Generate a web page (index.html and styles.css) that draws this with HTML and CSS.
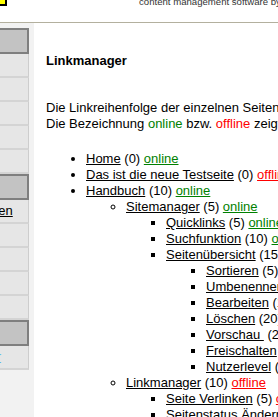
FILE: index.html
```html
<!DOCTYPE html>
<html lang="de">
<head>
    <meta charset="UTF-8">
    <title>Linkmanager</title>
    <link rel="stylesheet" href="styles.css">
</head>
<body>

    <div class="top">
        <div class="logo"></div>
        <div class="tagline">content management software by moderne-webseiten.de</div>
    </div>

    <div class="page">
        <div class="side">
            <div class="nav">
                <div class="nav-head">Seiten</div>
                <a class="nav-item" href="#">Übersicht</a>
                <a class="nav-item" href="#">Neue Seite</a>
                <a class="nav-item" href="#">Sortieren</a>
                <a class="nav-item" href="#">Papierkorb</a>
                <a class="nav-item" href="#">Vorlagen</a>

                <div class="nav-head">Inhalte</div>
                <a class="nav-item" href="#">Seiten anlegen</a>
                <a class="nav-item" href="#">Quicklinks</a>
                <a class="nav-item" href="#">Suchen</a>
                <a class="nav-item" href="#">Dateien</a>
                <a class="nav-item" href="#">Bilder</a>

                <div class="nav-head">Extras</div>
                <a class="nav-item nav-active" href="#">Linkmanager</a>
            </div>
        </div>

        <div class="main">
            <h1>Linkmanager</h1>
            <p>
                Die Linkreihenfolge der einzelnen Seiten kann per Drag &amp; Drop verändert werden.<br>
                Die Bezeichnung <span class="on">online</span> bzw. <span class="off">offline</span> zeigt den Status der Seite an.
            </p>

            <ul class="tree">
                <li><a href="#">Home</a> (0) <a class="on" href="#">online</a></li>
                <li><a href="#">Das ist die neue Testseite</a> (0) <a class="off" href="#">offline</a></li>
                <li><a href="#">Handbuch</a> (10) <a class="on" href="#">online</a>
                    <ul>
                        <li><a href="#">Sitemanager</a> (5) <a class="on" href="#">online</a>
                            <ul>
                                <li><a href="#">Quicklinks</a> (5) <a class="on" href="#">online</a></li>
                                <li><a href="#">Suchfunktion</a> (10) <a class="on" href="#">online</a></li>
                                <li><a href="#">Seitenübersicht</a> (15) <a class="on" href="#">online</a>
                                    <ul>
                                        <li><a href="#">Sortieren</a> (5) <a class="on" href="#">online</a></li>
                                        <li><a href="#">Umbenennen</a> (5) <a class="on" href="#">online</a></li>
                                        <li><a href="#">Bearbeiten</a> (10) <a class="on" href="#">online</a></li>
                                        <li><a href="#">Löschen</a> (20) <a class="on" href="#">online</a></li>
                                        <li><a href="#">Vorschau&nbsp;</a> (20) <a class="on" href="#">online</a></li>
                                        <li><a href="#">Freischalten</a> (5) <a class="on" href="#">online</a></li>
                                        <li><a href="#">Nutzerlevel</a> (5) <a class="on" href="#">online</a></li>
                                    </ul>
                                </li>
                            </ul>
                        </li>
                        <li><a href="#">Linkmanager</a> (10) <a class="off" href="#">offline</a>
                            <ul>
                                <li><a href="#">Seite Verlinken</a> (5) <a class="off" href="#">offline</a></li>
                                <li><a href="#">Seitenstatus Ändern</a> (5) <a class="off" href="#">offline</a></li>
                            </ul>
                        </li>
                    </ul>
                </li>
            </ul>
        </div>
    </div>

</body>
</html>
```

FILE: styles.css
```css
html, body {
  margin: 0;
  height: 100%;
  overflow: hidden;
}

body {
  font-family: "Liberation Sans", Arial, sans-serif;
  font-size: 13px;
  line-height: 16px;
  color: #000;
  background: #fff;
}

a {
  color: #000;
}

/* Kopfzeile */
.top {
  display: flex;
  height: 22px;
  border-bottom: 1px solid #b3b09e;
  white-space: nowrap;
  overflow: hidden;
}
.logo {
  flex: none;
  width: 5px;
  height: 4px;
  background: #ff0;
  border-right: 2px solid #000;
  border-bottom: 2px solid #000;
}
.tagline {
  margin: -3px 0 0 132px;
  font-size: 9.6px;
  line-height: 10px;
  color: #333;
}

.page {
  display: flex;
  height: 394px;
}

/* linke Navigation */
.side {
  flex: none;
  width: 34px;
  padding-top: 5px;
  background: #f2f2f2;
  overflow: hidden;
}
.nav {
  width: 111px;
  margin-left: -82px;
}
.nav-head {
  height: 22px;
  line-height: 22px;
  padding-left: 8px;
  background: #c3c3c3;
  border: 2px solid #7f7f7f;
  font-weight: bold;
}
.nav-item {
  display: block;
  height: 22px;
  line-height: 22px;
  padding-left: 8px;
  background: #e6e6e6;
  border-right: 1px solid #cdcdcd;
  border-bottom: 2px solid #d4d4d4;
}
.nav-active {
  color: #5bc0eb;
}

/* Inhalt */
.main {
  flex: 1;
  padding-left: 12px;
  white-space: nowrap;
  overflow: hidden;
}
.main h1 {
  margin: 30px 0 0;
  font-size: 13px;
  line-height: 16px;
}
.main p {
  margin: 31px 0 0;
}
.tree {
  margin: 19px 0 0;
  padding-left: 40px;
}
.tree ul {
  margin: 0;
  padding-left: 40px;
}

.on {
  color: #008000;
}
.off {
  color: #f00;
}
```
